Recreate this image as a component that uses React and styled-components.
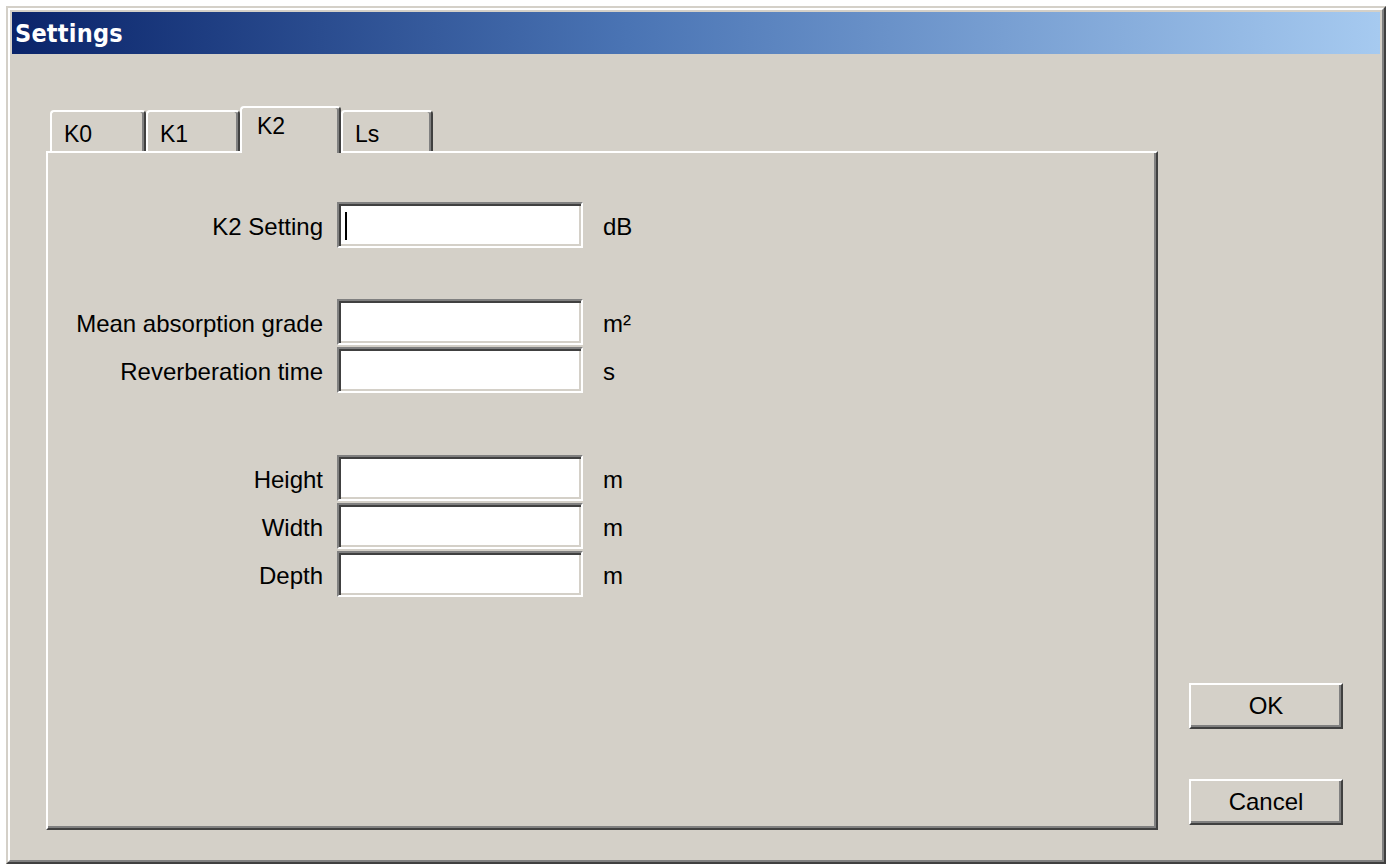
import React from 'react'
import styled, { createGlobalStyle } from 'styled-components'

const GlobalStyle = createGlobalStyle`
  html, body {
    margin: 0;
    padding: 0;
    background: #ffffff;
  }
  body {
    font-family: "Liberation Sans", Arial, sans-serif;
    color: #000;
  }
`

const Window = styled.div`
  margin: 6px 0 0 6px;
  width: 1380px;
  height: 858px;
  box-sizing: border-box;
  border: 2px solid;
  border-color: #d4d0c8 #404040 #404040 #d4d0c8;
`

const Frame = styled.div`
  height: 100%;
  box-sizing: border-box;
  border: 2px solid;
  border-color: #ffffff #808080 #808080 #ffffff;
  padding: 2px;
  background: #d4d0c8;
  display: flex;
  flex-direction: column;
`

const TitleBar = styled.div`
  height: 42px;
  flex-shrink: 0;
  display: flex;
  align-items: center;
  padding-left: 3px;
  background: linear-gradient(to right, #0a246a 0%, #4a74b4 45%, #a6caf0 100%);
  color: #fff;
  font-family: "DejaVu Sans Condensed", "Liberation Sans", Arial, sans-serif;
  font-weight: bold;
  font-size: 25px;
  letter-spacing: 0.2px;
`

const Body = styled.div`
  flex: 1;
  display: flex;
  padding: 52px 37px 28px 34px;
  min-height: 0;
`

const Main = styled.div`
  display: flex;
  flex-direction: column;
  width: 1112px;
`

const TabStrip = styled.div`
  position: relative;
  z-index: 1;
  height: 45px;
  display: flex;
  align-items: flex-end;
  padding-left: 4px;
`

const Tab = styled.div`
  box-sizing: border-box;
  width: ${p => p.$w}px;
  height: ${p => (p.$active ? 47 : 41)}px;
  margin-bottom: ${p => (p.$active ? -2 : 0)}px;
  padding: ${p => (p.$active ? '7px 0 0 15px' : '11px 0 0 12px')};
  background: #d4d0c8;
  border-top: 2px solid #fff;
  border-left: 2px solid #fff;
  border-right: 2px solid #404040;
  box-shadow: inset -2px 0 0 #808080;
  border-radius: 4px 4px 0 0;
  font-size: 23px;
  line-height: 22px;
`

const Panel = styled.div`
  flex: 1;
  box-sizing: border-box;
  border: 2px solid;
  border-color: #ffffff #404040 #404040 #ffffff;
  box-shadow: inset -2px -2px 0 #808080;
  padding-top: 49px;
`

const Group = styled.div`
  display: flex;
  flex-direction: column;
  gap: 2px;
  margin-bottom: ${p => p.$after}px;
`

const Row = styled.div`
  display: flex;
  align-items: center;
  height: 46px;
`

const Label = styled.span`
  width: 275px;
  padding-top: 4px;
  text-align: right;
  margin-right: 14px;
  font-size: 24px;
  white-space: nowrap;
`

const Field = styled.div`
  position: relative;
  box-sizing: border-box;
  width: 246px;
  height: 46px;
  background: #fff;
  border: 2px solid;
  border-color: #808080 #ffffff #ffffff #808080;
  box-shadow: inset 2px 2px 0 #404040, inset -2px -2px 0 #d4d0c8;
`

const Caret = styled.span`
  position: absolute;
  left: 6px;
  top: 8px;
  width: 2px;
  height: 28px;
  background: #000;
`

const Unit = styled.span`
  margin-left: 20px;
  padding-top: 4px;
  font-size: 24px;
`

const Side = styled.div`
  margin-left: 31px;
  display: flex;
  flex-direction: column;
  justify-content: flex-end;
  gap: 50px;
  padding-bottom: 5px;
`

const Button = styled.button`
  box-sizing: border-box;
  width: 154px;
  height: 46px;
  padding: 0;
  background: #d4d0c8;
  border: 2px solid;
  border-color: #ffffff #404040 #404040 #ffffff;
  box-shadow: inset -2px -2px 0 #808080;
  font-family: "Liberation Sans", Arial, sans-serif;
  font-size: 24px;
  color: #000;
`

const tabs = [
  { name: 'K0', w: 96 },
  { name: 'K1', w: 94 },
  { name: 'K2', w: 101, active: true },
  { name: 'Ls', w: 92 },
]

const groups = [
  { after: 51, rows: [{ label: 'K2 Setting', unit: 'dB', caret: true }] },
  {
    after: 62,
    rows: [
      { label: 'Mean absorption grade', unit: 'm²' },
      { label: 'Reverberation time', unit: 's' },
    ],
  },
  {
    after: 0,
    rows: [
      { label: 'Height', unit: 'm' },
      { label: 'Width', unit: 'm' },
      { label: 'Depth', unit: 'm' },
    ],
  },
]

export default function App() {
  return (
    <>
      <GlobalStyle />
      <Window>
        <Frame>
          <TitleBar>Settings</TitleBar>
          <Body>
            <Main>
              <TabStrip>
                {tabs.map(t => (
                  <Tab key={t.name} $w={t.w} $active={t.active}>{t.name}</Tab>
                ))}
              </TabStrip>
              <Panel>
                {groups.map((g, i) => (
                  <Group key={i} $after={g.after}>
                    {g.rows.map(r => (
                      <Row key={r.label}>
                        <Label>{r.label}</Label>
                        <Field>{r.caret && <Caret />}</Field>
                        <Unit>{r.unit}</Unit>
                      </Row>
                    ))}
                  </Group>
                ))}
              </Panel>
            </Main>
            <Side>
              <Button>OK</Button>
              <Button>Cancel</Button>
            </Side>
          </Body>
        </Frame>
      </Window>
    </>
  )
}
